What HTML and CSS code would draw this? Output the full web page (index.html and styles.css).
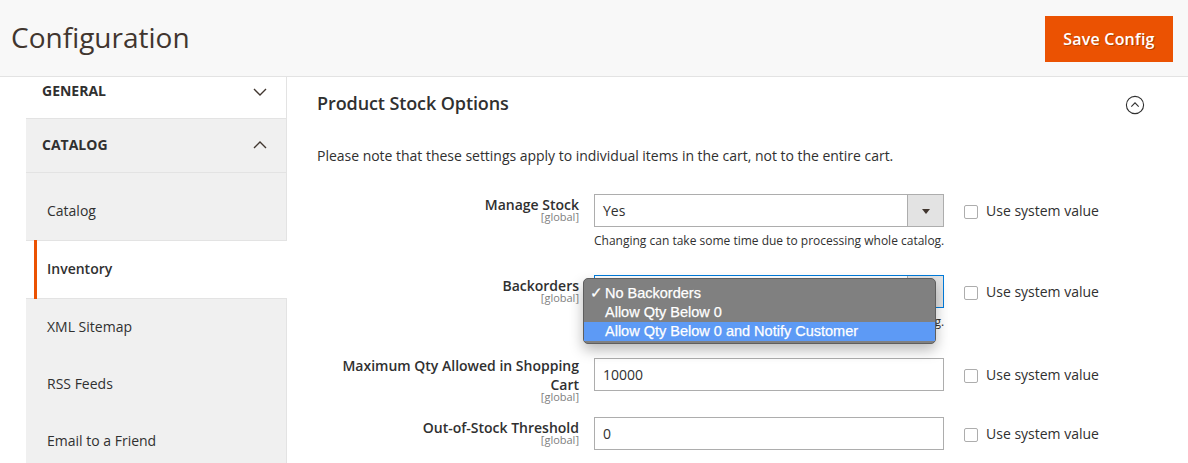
FILE: index.html
```html
<!DOCTYPE html>
<html lang="en">
<head>
<meta charset="utf-8">
<title>Configuration</title>
<link rel="stylesheet" href="styles.css">
</head>
<body>
<header class="page-header">
  <h1 class="page-title">Configuration</h1>
  <button class="btn-primary" type="button">Save Config</button>
</header>
<div class="page-body">
  <nav class="sidebar">
    <div class="nav-group nav-group--general">
      <span class="nav-group-title">General</span>
      <svg class="chevron" width="14" height="8" viewBox="0 0 14 8"><path d="M1 1 L7 7 L13 1" fill="none" stroke="#41362f" stroke-width="1.4"/></svg>
    </div>
    <div class="nav-group nav-group--open">
      <span class="nav-group-title">Catalog</span>
      <svg class="chevron" width="14" height="8" viewBox="0 0 14 8"><path d="M1 7 L7 1 L13 7" fill="none" stroke="#41362f" stroke-width="1.4"/></svg>
    </div>
    <ul class="nav-sub">
      <li class="nav-item">Catalog</li>
      <li class="nav-item nav-item--active">Inventory</li>
      <li class="nav-item">XML Sitemap</li>
      <li class="nav-item">RSS Feeds</li>
      <li class="nav-item">Email to a Friend</li>
    </ul>
  </nav>
  <main class="content">
    <div class="section-head">
      <h2 class="section-title">Product Stock Options</h2>
      <svg class="collapse-icon" width="20" height="20" viewBox="0 0 20 20"><circle cx="10" cy="10" r="8.6" fill="none" stroke="#303030" stroke-width="1.1"/><path d="M6.3 11.6 L10 7.9 L13.7 11.6" fill="none" stroke="#303030" stroke-width="1.1"/></svg>
    </div>
    <p class="note">Please note that these settings apply to individual items in the cart, not to the entire cart.</p>
    <div class="fields">
      <div class="field field--first">
        <div class="field-label"><span class="label-text">Manage Stock</span><span class="scope">[global]</span></div>
        <div class="field-control">
          <div class="select"><span class="select-value">Yes</span><span class="select-arrow"></span></div>
          <p class="hint">Changing can take some time due to processing whole catalog.</p>
        </div>
        <label class="use-default"><span class="checkbox"></span><span>Use system value</span></label>
      </div>
      <div class="field field--second">
        <div class="field-label"><span class="label-text">Backorders</span><span class="scope">[global]</span></div>
        <div class="field-control">
          <div class="select select--focus"><span class="select-value">No Backorders</span><span class="select-arrow"></span>
            <ul class="native-menu">
              <li class="menu-option menu-option--checked"><span class="menu-check">✓</span>No Backorders</li>
              <li class="menu-option">Allow Qty Below 0</li>
              <li class="menu-option menu-option--hover">Allow Qty Below 0 and Notify Customer</li>
            </ul>
          </div>
          <p class="hint">Changing can take some time due to processing whole catalog.</p>
        </div>
        <label class="use-default"><span class="checkbox"></span><span>Use system value</span></label>
      </div>
      <div class="field field--multiline">
        <div class="field-label"><span class="label-text">Maximum Qty Allowed in Shopping Cart</span><span class="scope">[global]</span></div>
        <div class="field-control">
          <div class="input">10000</div>
        </div>
        <label class="use-default"><span class="checkbox"></span><span>Use system value</span></label>
      </div>
      <div class="field">
        <div class="field-label"><span class="label-text">Out-of-Stock Threshold</span><span class="scope">[global]</span></div>
        <div class="field-control">
          <div class="input">0</div>
        </div>
        <label class="use-default"><span class="checkbox"></span><span>Use system value</span></label>
      </div>
    </div>
  </main>
</div>
</body>
</html>
```
FILE: styles.css
```css
* { box-sizing: border-box; }
html, body { margin: 0; padding: 0; }
body {
  font-family: "Open Sans", "Noto Sans", sans-serif;
  color: #303030;
  background: #fff;
  height: 463px;
  overflow: hidden;
  font-size: 14px;
}
.page-header {
  height: 77px;
  background: #f8f8f8;
  border-bottom: 1px solid #e3e3e3;
  display: flex;
  align-items: center;
  justify-content: space-between;
  padding: 0 15px 0 11px;
}
.page-title {
  margin: 0;
  font-size: 28px;
  font-weight: 400;
  color: #41362f;
  line-height: 1;
  padding-bottom: 3px;
}
.btn-primary {
  width: 128px;
  height: 46px;
  border: 0;
  background: #eb5202;
  color: #fff;
  font-family: "Open Sans", sans-serif;
  font-size: 16px;
  font-weight: 600;
  letter-spacing: 0.2px;
  text-shadow: 1px 1px 0 rgba(0,0,0,0.25);
  padding: 0;
  margin-top: 1px;
}
.page-body {
  display: flex;
}
.sidebar {
  width: 261px;
  margin-left: 26px;
  flex: none;
}
.nav-group {
  display: flex;
  justify-content: space-between;
  padding: 0 19px 0 16px;
  border-bottom: 1px solid #e3e3e3;
  border-right: 1px solid #e3e3e3;
}
.nav-group-title {
  font-weight: 700;
  font-size: 14px;
  text-transform: uppercase;
  color: #303030;
}
.nav-group--general {
  height: 42px;
  align-items: flex-start;
  padding-top: 4px;
  background: #fff;
}
.nav-group--general .chevron { margin-top: 7px; }
.nav-group--open {
  height: 54px;
  align-items: center;
  padding-bottom: 2px;
  background: #f0f0f0;
}
.nav-sub {
  list-style: none;
  margin: 0;
  padding: 10px 0 0 0;
  background: #f0f0f0;
  border-right: 1px solid #e3e3e3;
}
.nav-item {
  height: 57px;
  display: flex;
  align-items: center;
  padding-left: 21px;
  padding-bottom: 2px;
  font-size: 14px;
  color: #303030;
}
.nav-item--active {
  height: 59px;
  background: #fff;
  border-top: 1px solid #e3e3e3;
  border-bottom: 1px solid #e3e3e3;
  margin-right: -1px;
  font-weight: 600;
  position: relative;
}
.nav-item--active::before {
  content: "";
  position: absolute;
  left: 8px;
  top: -1px;
  bottom: -1px;
  width: 3px;
  background: #eb5202;
}
.content {
  flex: 1;
  padding: 0 43px 0 30px;
}
.section-head {
  display: flex;
  align-items: center;
  justify-content: space-between;
  padding-top: 14px;
}
.section-title {
  margin: 0;
  font-size: 18px;
  font-weight: 600;
  line-height: 24px;
  color: #303030;
  letter-spacing: -0.1px;
}
.collapse-icon { margin-top: 4px; }
.note {
  margin: 31px 0 0 0;
  font-size: 14px;
  line-height: 20px;
  letter-spacing: -0.02px;
}
.fields { margin-top: 28px; }
.field {
  display: grid;
  grid-template-columns: 262px 350px auto;
  column-gap: 15px;
  margin-bottom: 14px;
}
.field--first { margin-bottom: 27px; }
.field--second { margin-bottom: 29px; }
.field-label {
  display: flex;
  flex-direction: column;
  align-items: flex-end;
  text-align: right;
  padding-top: 1px;
}
.label-text {
  font-weight: 600;
  font-size: 14px;
  line-height: 19px;
}
.field--multiline .field-label { margin-top: -3px; }
.scope {
  font-size: 11px;
  line-height: 12px;
  color: #808080;
  margin-top: -3px;
}
.field-control { position: relative; }
.select, .input {
  height: 33px;
  border: 1px solid #adadad;
  display: flex;
  align-items: center;
  font-size: 14px;
  padding-left: 8px;
  background: #fff;
  position: relative;
}
.select-value { flex: 1; }
.select-arrow {
  width: 36px;
  align-self: stretch;
  background: #e3e3e3;
  border-left: 1px solid #adadad;
  position: relative;
}
.select-arrow::after {
  content: "";
  position: absolute;
  left: 50%;
  top: 50%;
  margin: -2px 0 0 -4px;
  border-left: 4px solid transparent;
  border-right: 4px solid transparent;
  border-top: 5px solid #41362f;
}
.select--focus { border-color: #007bdb; }
.select--focus .select-arrow { border-left-color: #adadad; }
.hint {
  margin: 7px 0 0 0;
  font-size: 12px;
  line-height: 14px;
  white-space: nowrap;
}
.use-default {
  margin-left: 5px;
  height: 33px;
  display: flex;
  align-items: center;
  font-size: 14px;
  gap: 8px;
}
.checkbox {
  width: 14px;
  height: 14px;
  border: 1px solid #adadad;
  border-radius: 2px;
  background: #fff;
  margin-top: 2px;
}
.native-menu {
  position: absolute;
  left: -12px;
  top: 2px;
  width: 353px;
  height: 66px;
  margin: 0;
  padding: 5px 0 0 0;
  list-style: none;
  background: #808080;
  border: 1px solid #5e5e5e;
  border-radius: 5px;
  box-shadow: 0 6px 14px rgba(0,0,0,0.28);
  z-index: 5;
  font-family: "Liberation Sans", Arial, sans-serif;
  font-size: 14.5px;
  color: #fff;
}
.menu-option {
  height: 19px;
  line-height: 19px;
  padding-left: 21px;
  position: relative;
  -webkit-text-stroke: 0.25px #fff;
}
.menu-option--hover { background: #5d9af5; }
.menu-check {
  position: absolute;
  left: 6px;
}
```
